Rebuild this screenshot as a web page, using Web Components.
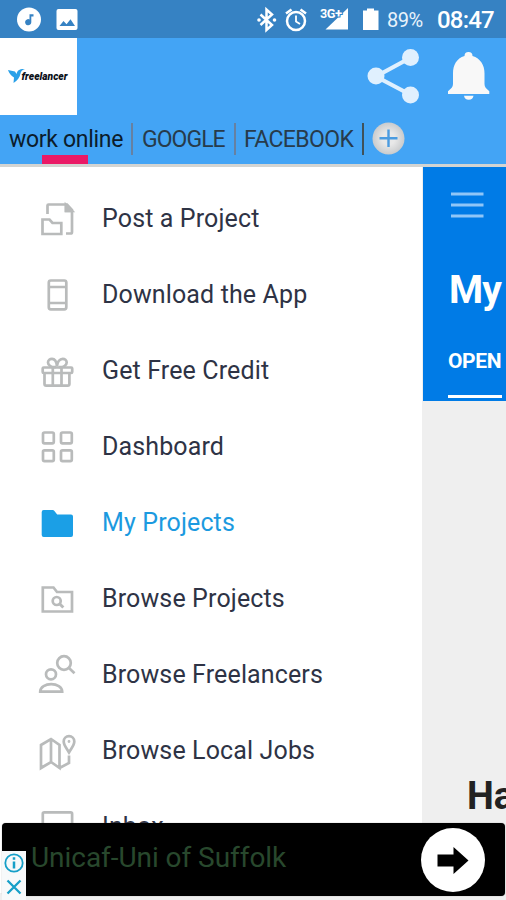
<!DOCTYPE html>
<html lang="en">
<head>
<meta charset="utf-8">
<title>Freelancer</title>
<style>
html,body{margin:0;height:100%;overflow:hidden;background:#efefef;font-family:Roboto,"Liberation Sans",sans-serif}
</style>
</head>
<body>
<phone-screen></phone-screen>
<script>
const define = (name, html) => customElements.define(name, class extends HTMLElement {
  constructor() {
    super();
    const t = document.createElement('template');
    t.innerHTML = html;
    this.attachShadow({ mode: 'open' }).append(t.content.cloneNode(true));
  }
});

define('status-bar', `
<style>
:host{display:flex;height:38px;background:#3682c3;color:#fff;align-items:center;overflow:hidden}
svg{display:block;flex:none}
.pct{font-size:20px;letter-spacing:-.55px;line-height:38px;margin-left:8px;padding-top:2px;width:50px;flex:none;color:#e9f3fb}
.time{font-size:24px;font-weight:500;letter-spacing:-.8px;line-height:38px;padding-top:2px;width:69px;flex:none}
.gap{flex:1}
</style>
<svg width="100" height="38" viewBox="0 0 100 38"><circle cx="29" cy="19.500" r="12" fill="#fff"/><path d="M29.500 14.200h4v2.200h-2.200v5.800a3.100 3.100 0 1 1-1.800-2.800z" fill="#3682c3"/><rect x="56.500" y="9" width="21" height="21" rx="2" fill="#fff"/><path d="M59.500 26l4-5 3 3.300 4-5 4.500 6.700z" fill="#3682c3"/></svg>
<div class="gap"></div>
<svg width="126" height="38" viewBox="253 0 126 38" fill="none" stroke="#fff">
<path d="M260.500 14.500l11.500 10.500-5.500 5V9.500l5.500 5-11.500 10.500" stroke-width="2.500"/><circle cx="259" cy="20" r="1.800" fill="#fff" stroke="none"/><circle cx="274.500" cy="20" r="1.800" fill="#fff" stroke="none"/>
<circle cx="296" cy="21" r="9" stroke-width="2.500"/><path d="M296 15.500v6l4 2.500" stroke-width="1.800"/><path d="M286 13.500l5.500-4M306 13.500l-5.500-4" stroke-width="2.500"/>
<path d="M348 8v21.500h-22.500z" fill="#fff" stroke="none"/>
<text x="320" y="17.500" font-family="Roboto,sans-serif" font-size="13" font-weight="700" fill="#fff" stroke="#3682c3" stroke-width="2" paint-order="stroke" textLength="22">3G+</text>
<path d="M363 10.500h4v-2h7v2h4.500V30H363z" fill="#fff" stroke="none"/></svg>
<div class="pct">89%</div><div class="time">08:47</div>`);

define('brand-logo', `
<style>:host{display:block;width:77px;height:77px;background:#fff}svg{display:block}</style>
<svg width="77" height="77" viewBox="0 38 77 77"><path d="M8 70l7 1.500 1.500 2.500c1-4 3-5.300 8.500-5-3 1-4 2.300-4.500 4.500-.6 4-3 7-7 9.500l.500-5.500c-3-2-5-4.500-6-7.500z" fill="#29a0e8"/>
<text x="21.500" y="80" font-family="Roboto,sans-serif" font-size="11" font-weight="900" font-style="italic" fill="#0b0f18" textLength="46" lengthAdjust="spacingAndGlyphs">freelancer</text></svg>`);

define('tab-item', `
<style>
:host{display:block;position:relative;flex:none;height:49px;font-size:23px;line-height:49px;white-space:nowrap;color:#273b4b}
:host([active]){color:#0b1c2c}
i{display:none}
:host([active]) i{display:block;position:absolute;left:33px;bottom:0;width:46px;height:9px;background:#ea1a66}
</style><slot></slot><i></i>`);

define('app-header', `
<style>
:host{display:flex;flex-direction:column;height:126px;background:#43a4f5;border-bottom:3px solid #d3d4d2}
.top{display:flex;justify-content:space-between;height:77px}
svg{display:block;flex:none}
.tabs{display:flex;height:49px;padding-left:9px}
.tabs b{flex:none;width:2px;height:32px;margin-top:8px;background:#6681a2}
.tabs b.d{background:#40525a}
</style>
<div class="top"><brand-logo></brand-logo>
<svg width="146" height="77" viewBox="360 38 146 77"><g fill="#e0f0fe" stroke="#e0f0fe"><path d="M410 58l-34 18.500 34 18" fill="none" stroke-width="4.200"/><circle cx="410.500" cy="57.500" r="8.500" stroke="none"/><circle cx="376" cy="76" r="8.500" stroke="none"/><circle cx="410.500" cy="95" r="8.500" stroke="none"/></g>
<path d="M464.500 56a4 4 0 0 1 8 0c8 2.500 12 9 12 17.500v10.500c0 3 1.500 4.500 4.800 7.200V94H448v-2.800c3.300-2.700 5-4.200 5-7.200V73.500c0-8.500 3.500-15 11.500-17.500zM464 95.700h9.500a4.800 4.800 0 0 1-9.500 0z" fill="#f8f8f8"/></svg></div>
<div class="tabs">
<tab-item active style="width:122px;letter-spacing:-.3px">work online</tab-item><b></b>
<tab-item style="width:101px;text-indent:9px;letter-spacing:-.95px">GOOGLE</tab-item><b></b>
<tab-item style="width:126px;text-indent:8px;letter-spacing:-.6px">FACEBOOK</tab-item><b class="d"></b>
<svg width="44" height="49" viewBox="364 115 44 49"><defs><radialGradient id="g"><stop offset=".4" stop-color="#e8e8e8"/><stop offset="1" stop-color="#c9cbcd"/></radialGradient></defs><circle cx="388.500" cy="138.500" r="16" fill="url(#g)"/><path d="M379.500 138.200h18M388.500 129.500v17.500" stroke="#4a9be0" stroke-width="2.400"/></svg>
</div>`);

define('menu-item', `
<style>
:host{display:flex;align-items:center;height:76px;flex:none;padding-left:36px;gap:22px;color:#2e3345;font-size:25px;letter-spacing:.13px;white-space:nowrap}
:host([active]){color:#1b9ae0}
span{line-height:74px;padding-top:2px}
</style><slot name="icon"></slot><span><slot></slot></span>`);

const icons = {
  post: '<path d="M11.500 18V9.500q0-1 1-1H31l5 5.500v22q0 1.500-1.500 1.500H30M30 9v6h6M6.500 23.500h7l3 3.500h8.800v11H6.500z"/><path d="M30 9l6 6h-6z" fill="#b9bbbb"/>',
  phone: '<rect x="12.800" y="8.500" width="17.500" height="28.800" rx="2"/><path d="M12.500 15h17.500M12.500 31h17.500"/>',
  gift: '<rect x="6.700" y="19.500" width="29.500" height="5.500" rx="1"/><path d="M8.500 25v11q0 1.700 1.700 1.700h21.500q1.700 0 1.700-1.700V25M16.800 19.500v18M25.500 19.500v18"/><path d="M20 19c-4.500.5-8-1.500-8-4.500 0-2.500 2-3.700 4-3.700 2.800 0 4.600 3 5 7.500.4-4.500 2.800-7.500 5.700-7.500 2 0 4 1.200 4 3.700 0 3-3.500 5-8 4.500"/>',
  grid: '<rect x="7" y="8.500" width="10.800" height="10.800" rx="1.500"/><rect x="25" y="8.500" width="10.800" height="10.800" rx="1.500"/><rect x="7" y="26.300" width="10.800" height="10.800" rx="1.500"/><rect x="25" y="26.300" width="10.800" height="10.800" rx="1.500"/>',
  folder: '<path d="M5.700 12q0-2 2-2h9q1 0 1.500.7l3 3.800H35q2 0 2 2V35q0 2-2 2H7.700q-2 0-2-2z" fill="#1b9fe6" stroke="none"/>',
  search: '<path d="M6.800 11.500h10.700l3.500 4.500h15v19.500H6.800z"/><circle cx="20.700" cy="25" r="4"/><path d="M23.300 27.500l4 4" stroke-width="3"/>',
  people: '<circle cx="28" cy="11" r="6.800"/><path d="M33 16l5.500 5.200"/><circle cx="15" cy="22.300" r="5"/><path d="M4.200 39.700c0-10 22-10 22 0z"/>',
  map: '<path d="M5 17l10-6 8.500 6v23L15 34 5 40zM15 11v23M23.500 40L33 35v-7.500"/><path d="M33 24.500c-3-5-5.300-7.500-5.300-11a5.300 5.300 0 0 1 10.600 0c0 3.500-2.300 6-5.300 11z"/><circle cx="33" cy="13.500" r=".8" stroke-width="1.200"/>',
  inbox: '<rect x="6.800" y="8.300" width="29.300" height="28" rx="1.500"/>'
};
const entries = [
  ['post', 'Post a Project'], ['phone', 'Download the App'], ['gift', 'Get Free Credit'],
  ['grid', 'Dashboard'], ['folder', 'My Projects'], ['search', 'Browse Projects'],
  ['people', 'Browse Freelancers'], ['map', 'Browse Local Jobs'], ['inbox', 'Inbox']
];
define('side-drawer', `
<style>
:host{display:flex;flex-direction:column;width:422px;flex:none;background:#fff;padding-top:13px;box-sizing:border-box;overflow:hidden}
svg{display:block;flex:none}
</style>` + entries.map(([icon, label]) => `<menu-item${icon === 'folder' ? ' active' : ''}><svg slot="icon" width="44" height="44" viewBox="0 0 44 44" fill="none" stroke="#b9bbbb" stroke-width="2.700">${icons[icon]}</svg>${label}</menu-item>`).join(''));

define('page-preview', `
<style>
:host{display:flex;flex-direction:column;flex:1;min-width:0;background:#efefef;overflow:hidden}
.hero{height:234px;background:#007be6;color:#fff;padding-left:26px;box-sizing:border-box;display:flex;flex-direction:column;flex:none;margin-left:1px;white-space:nowrap}
svg{display:block;margin-top:24px;flex:none}
h1{font-size:39px;line-height:46px;font-weight:700;margin:48px 0 0;letter-spacing:-.9px}
.tab{font-size:21px;line-height:26px;font-weight:700;margin:35px 0 0 -1px;letter-spacing:-.4px;height:46px;box-sizing:border-box}
.line{width:54px;height:3px;background:#fff;flex:none;margin-left:-1px;margin-top:1px}
h2{margin:372px 0 0 45px;font-size:38px;line-height:46px;font-weight:700;color:#222;white-space:nowrap}
</style>
<div class="hero"><svg width="40" height="28" viewBox="0 0 40 28"><path d="M2 3h32.500M2 14h32.500M2 25h32.500" stroke="#8fc6f7" stroke-width="2.800"/></svg><h1>My</h1><div class="tab">OPEN</div><div class="line"></div></div>
<h2>Ha</h2>`);

define('ad-banner', `
<style>
:host{display:block;position:absolute;left:0;right:0;bottom:0;height:77px;background:linear-gradient(transparent 70px,#efefef 70px)}
.bar{display:flex;align-items:center;justify-content:space-between;height:73px;margin:0 1px 0 2px;background:#000;border-radius:4px;box-sizing:border-box;padding:0 20px 0 29px;box-shadow:0 0 1px #777}
.txt{font-size:28px;line-height:34px;color:#28482d;letter-spacing:-.05px;margin-top:-4px;white-space:nowrap}
svg{display:block;flex:none}
.info{position:absolute;left:2px;bottom:0;width:24px;height:49px;background:#f7f9fa}
</style>
<div class="bar"><div class="txt">Unicaf-Uni of Suffolk</div><svg width="64" height="64" viewBox="0 0 64 64"><circle cx="32" cy="32" r="32" fill="#fff"/><path d="M16.500 26.500h16v-7.500l15 13.500-15 13.500v-7.500h-16z" fill="#000"/></svg></div>
<svg class="info" viewBox="2 851 24 49" fill="none" stroke="#169fc8"><circle cx="14" cy="863" r="8.700" stroke-width="1.800"/><path d="M14 861.500v7M14 857.200v2.500" stroke-width="2.500"/><path d="M7.500 880.500l13 13M20.500 880.500l-13 13" stroke-width="2.300"/></svg>`);

define('phone-screen', `
<style>
:host{display:flex;flex-direction:column;position:relative;width:506px;height:900px;overflow:hidden}
main{display:flex;flex:1;min-height:0}
</style>
<status-bar></status-bar><app-header></app-header>
<main><side-drawer></side-drawer><page-preview></page-preview></main>
<ad-banner></ad-banner>`);
</script>
</body>
</html>
